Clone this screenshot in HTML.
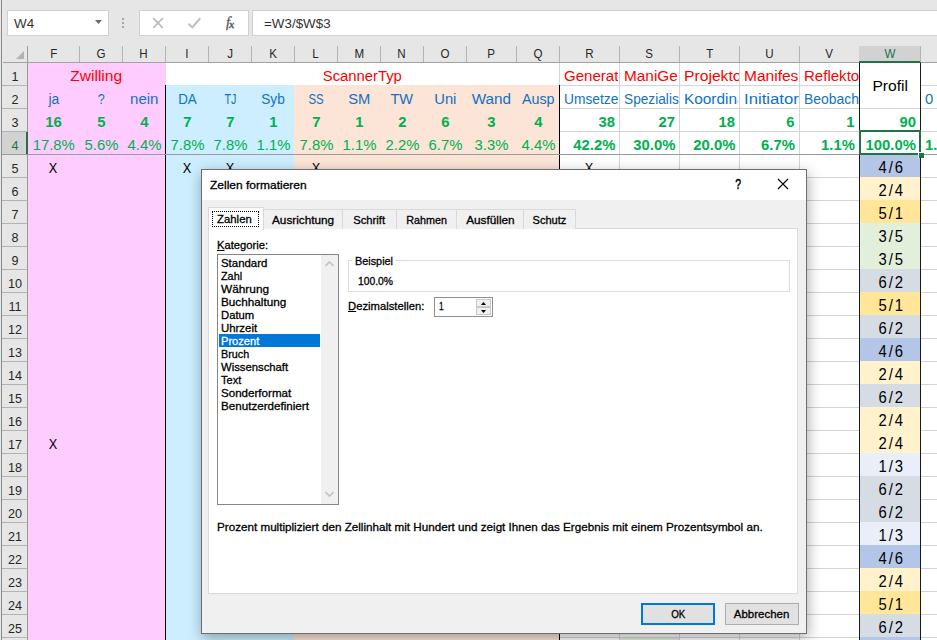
<!DOCTYPE html>
<html><head><meta charset="utf-8"><title>Zellen formatieren</title>
<style>
html,body{margin:0;padding:0}
body{width:937px;height:640px;overflow:hidden;background:#fff;position:relative;font-family:"Liberation Sans",sans-serif;}
.a{position:absolute}
.t{position:absolute;white-space:nowrap;line-height:1}
.ch{position:absolute;top:46px;height:16px;font-size:12.6px;line-height:17px;text-align:center;color:#262626}
.rh{position:absolute;left:3px;width:24px;height:22px;font-size:12.6px;line-height:29px;text-align:center;color:#262626}
.c{position:absolute;display:flex;height:22px;font-size:15.8px;line-height:26px;white-space:nowrap;overflow:hidden}
.b{font-weight:bold}
.red{color:#ff0000}.blu{color:#0f72c4}.grn{color:#00b050}
.dl{font-size:11.4px;color:#000;-webkit-text-stroke:0.3px}
</style></head><body>

<div class="a" style="left:0;top:0;width:937px;height:63px;background:#e6e6e6"></div>
<div class="a" style="left:7px;top:10px;width:102px;height:26px;background:#fff;border:1px solid #d0d0d0;box-sizing:border-box"></div>
<div class="t" style="left:14px;top:17px;font-size:13.4px;color:#333">W4</div>
<svg class="a" style="left:95px;top:20px" width="8" height="5"><path d="M0 0h7L3.5 4z" fill="#6a6a6a"/></svg>
<div class="a" style="left:122px;top:18px;width:2px;height:2px;background:#a6a6a6;box-shadow:0 4px 0 #a6a6a6,0 8px 0 #a6a6a6"></div>
<div class="a" style="left:139px;top:10px;width:110px;height:26px;background:#fff;border:1px solid #d0d0d0;box-sizing:border-box"></div>
<svg class="a" style="left:152px;top:17px" width="12" height="12"><path d="M1.2 1.2l9.6 9.6M10.8 1.2l-9.6 9.6" stroke="#bdbdbd" stroke-width="1.8" fill="none"/></svg>
<svg class="a" style="left:187px;top:17px" width="15" height="12"><path d="M1.5 6.8l3.8 3.6l8-9.2" stroke="#bdbdbd" stroke-width="2" fill="none"/></svg>
<div class="t" style="left:226px;top:15px;font-family:'Liberation Serif',serif;font-style:italic;font-size:14.5px;color:#5a5a5a;-webkit-text-stroke:.3px">f<b style="font-size:10.5px;margin-left:-1px;position:relative;top:1px">x</b></div>
<div class="a" style="left:252px;top:10px;width:700px;height:26px;background:#fff;border:1px solid #d0d0d0;box-sizing:border-box"></div>
<div class="t" style="left:264px;top:17px;font-size:13.4px;color:#333">=W3/$W$3</div>
<svg class="a" style="left:16px;top:51px" width="8" height="8"><path d="M8 0v8H0z" fill="#b2b2b2"/></svg>
<div class="a" style="left:27px;top:46px;width:1px;height:17px;background:#9b9b9b"></div>
<div class="a" style="left:3px;top:62px;width:934px;height:1px;background:#a3a3a3"></div>
<div class="ch" style="left:28px;width:51px"><span style="display:inline-block;transform:scaleX(.92)">F</span></div>
<div class="a" style="left:79px;top:46px;width:1px;height:16px;background:#b4b4b4"></div>
<div class="ch" style="left:80px;width:42px"><span style="display:inline-block;transform:scaleX(.92)">G</span></div>
<div class="a" style="left:122px;top:46px;width:1px;height:16px;background:#b4b4b4"></div>
<div class="ch" style="left:123px;width:42px"><span style="display:inline-block;transform:scaleX(.92)">H</span></div>
<div class="a" style="left:165px;top:46px;width:1px;height:16px;background:#b4b4b4"></div>
<div class="ch" style="left:166px;width:42px"><span style="display:inline-block;transform:scaleX(.92)">I</span></div>
<div class="a" style="left:208px;top:46px;width:1px;height:16px;background:#b4b4b4"></div>
<div class="ch" style="left:209px;width:42px"><span style="display:inline-block;transform:scaleX(.92)">J</span></div>
<div class="a" style="left:251px;top:46px;width:1px;height:16px;background:#b4b4b4"></div>
<div class="ch" style="left:252px;width:42px"><span style="display:inline-block;transform:scaleX(.92)">K</span></div>
<div class="a" style="left:294px;top:46px;width:1px;height:16px;background:#b4b4b4"></div>
<div class="ch" style="left:295px;width:42px"><span style="display:inline-block;transform:scaleX(.92)">L</span></div>
<div class="a" style="left:337px;top:46px;width:1px;height:16px;background:#b4b4b4"></div>
<div class="ch" style="left:338px;width:42px"><span style="display:inline-block;transform:scaleX(.92)">M</span></div>
<div class="a" style="left:380px;top:46px;width:1px;height:16px;background:#b4b4b4"></div>
<div class="ch" style="left:381px;width:42px"><span style="display:inline-block;transform:scaleX(.92)">N</span></div>
<div class="a" style="left:423px;top:46px;width:1px;height:16px;background:#b4b4b4"></div>
<div class="ch" style="left:424px;width:42px"><span style="display:inline-block;transform:scaleX(.92)">O</span></div>
<div class="a" style="left:466px;top:46px;width:1px;height:16px;background:#b4b4b4"></div>
<div class="ch" style="left:467px;width:49px"><span style="display:inline-block;transform:scaleX(.92)">P</span></div>
<div class="a" style="left:516px;top:46px;width:1px;height:16px;background:#b4b4b4"></div>
<div class="ch" style="left:517px;width:42px"><span style="display:inline-block;transform:scaleX(.92)">Q</span></div>
<div class="a" style="left:559px;top:46px;width:1px;height:16px;background:#b4b4b4"></div>
<div class="ch" style="left:560px;width:59px"><span style="display:inline-block;transform:scaleX(.92)">R</span></div>
<div class="a" style="left:619px;top:46px;width:1px;height:16px;background:#b4b4b4"></div>
<div class="ch" style="left:620px;width:59px"><span style="display:inline-block;transform:scaleX(.92)">S</span></div>
<div class="a" style="left:679px;top:46px;width:1px;height:16px;background:#b4b4b4"></div>
<div class="ch" style="left:680px;width:59px"><span style="display:inline-block;transform:scaleX(.92)">T</span></div>
<div class="a" style="left:739px;top:46px;width:1px;height:16px;background:#b4b4b4"></div>
<div class="ch" style="left:740px;width:59px"><span style="display:inline-block;transform:scaleX(.92)">U</span></div>
<div class="a" style="left:799px;top:46px;width:1px;height:16px;background:#b4b4b4"></div>
<div class="ch" style="left:800px;width:59px"><span style="display:inline-block;transform:scaleX(.92)">V</span></div>
<div class="a" style="left:859px;top:46px;width:1px;height:16px;background:#b4b4b4"></div>
<div class="a" style="left:859px;top:46px;width:62px;height:15px;background:#d2d2d2"></div>
<div class="a" style="left:859px;top:61px;width:62px;height:2px;background:#217346"></div>
<div class="ch" style="left:860px;width:60px;color:#217346"><span style="display:inline-block;transform:scaleX(.92)">W</span></div>
<div class="a" style="left:920px;top:46px;width:1px;height:16px;background:#b4b4b4"></div>
<div class="ch" style="left:921px;width:59px"><span style="display:inline-block;transform:scaleX(.92)">X</span></div>
<div class="a" style="left:980px;top:46px;width:1px;height:16px;background:#b4b4b4"></div>
<div class="a" style="left:0px;top:63px;width:28px;height:577px;background:#e6e6e6"></div>
<div class="a" style="left:27px;top:63px;width:1px;height:577px;background:#9b9b9b"></div>
<div class="rh" style="top:63px">1</div>
<div class="a" style="left:2px;top:85px;width:25px;height:1px;background:#b4b4b4"></div>
<div class="rh" style="top:86px">2</div>
<div class="a" style="left:2px;top:108px;width:25px;height:1px;background:#b4b4b4"></div>
<div class="rh" style="top:109px">3</div>
<div class="a" style="left:2px;top:131px;width:25px;height:1px;background:#b4b4b4"></div>
<div class="a" style="left:2px;top:132px;width:25px;height:22px;background:#d2d2d2"></div>
<div class="a" style="left:26px;top:132px;width:2px;height:22px;background:#217346"></div>
<div class="rh" style="top:132px;color:#217346">4</div>
<div class="a" style="left:2px;top:154px;width:25px;height:1px;background:#b4b4b4"></div>
<div class="rh" style="top:155px">5</div>
<div class="a" style="left:2px;top:177px;width:25px;height:1px;background:#b4b4b4"></div>
<div class="rh" style="top:178px">6</div>
<div class="a" style="left:2px;top:200px;width:25px;height:1px;background:#b4b4b4"></div>
<div class="rh" style="top:201px">7</div>
<div class="a" style="left:2px;top:223px;width:25px;height:1px;background:#b4b4b4"></div>
<div class="rh" style="top:224px">8</div>
<div class="a" style="left:2px;top:246px;width:25px;height:1px;background:#b4b4b4"></div>
<div class="rh" style="top:247px">9</div>
<div class="a" style="left:2px;top:269px;width:25px;height:1px;background:#b4b4b4"></div>
<div class="rh" style="top:270px">10</div>
<div class="a" style="left:2px;top:292px;width:25px;height:1px;background:#b4b4b4"></div>
<div class="rh" style="top:293px">11</div>
<div class="a" style="left:2px;top:315px;width:25px;height:1px;background:#b4b4b4"></div>
<div class="rh" style="top:316px">12</div>
<div class="a" style="left:2px;top:338px;width:25px;height:1px;background:#b4b4b4"></div>
<div class="rh" style="top:339px">13</div>
<div class="a" style="left:2px;top:361px;width:25px;height:1px;background:#b4b4b4"></div>
<div class="rh" style="top:362px">14</div>
<div class="a" style="left:2px;top:384px;width:25px;height:1px;background:#b4b4b4"></div>
<div class="rh" style="top:385px">15</div>
<div class="a" style="left:2px;top:407px;width:25px;height:1px;background:#b4b4b4"></div>
<div class="rh" style="top:408px">16</div>
<div class="a" style="left:2px;top:430px;width:25px;height:1px;background:#b4b4b4"></div>
<div class="rh" style="top:431px">17</div>
<div class="a" style="left:2px;top:453px;width:25px;height:1px;background:#b4b4b4"></div>
<div class="rh" style="top:454px">18</div>
<div class="a" style="left:2px;top:476px;width:25px;height:1px;background:#b4b4b4"></div>
<div class="rh" style="top:477px">19</div>
<div class="a" style="left:2px;top:499px;width:25px;height:1px;background:#b4b4b4"></div>
<div class="rh" style="top:500px">20</div>
<div class="a" style="left:2px;top:522px;width:25px;height:1px;background:#b4b4b4"></div>
<div class="rh" style="top:523px">21</div>
<div class="a" style="left:2px;top:545px;width:25px;height:1px;background:#b4b4b4"></div>
<div class="rh" style="top:546px">22</div>
<div class="a" style="left:2px;top:568px;width:25px;height:1px;background:#b4b4b4"></div>
<div class="rh" style="top:569px">23</div>
<div class="a" style="left:2px;top:591px;width:25px;height:1px;background:#b4b4b4"></div>
<div class="rh" style="top:592px">24</div>
<div class="a" style="left:2px;top:614px;width:25px;height:1px;background:#b4b4b4"></div>
<div class="rh" style="top:615px">25</div>
<div class="a" style="left:2px;top:637px;width:25px;height:1px;background:#b4b4b4"></div>
<div class="rh" style="top:638px">26</div>
<div class="a" style="left:2px;top:660px;width:25px;height:1px;background:#b4b4b4"></div>
<div class="a" style="left:1px;top:0;width:1px;height:640px;background:#8c8c8c"></div>
<div class="a" style="left:28px;top:85px;width:909px;height:1px;background:#d4d4d4"></div>
<div class="a" style="left:28px;top:108px;width:909px;height:1px;background:#d4d4d4"></div>
<div class="a" style="left:28px;top:131px;width:909px;height:1px;background:#d4d4d4"></div>
<div class="a" style="left:28px;top:154px;width:909px;height:1px;background:#d4d4d4"></div>
<div class="a" style="left:28px;top:177px;width:909px;height:1px;background:#d4d4d4"></div>
<div class="a" style="left:28px;top:200px;width:909px;height:1px;background:#d4d4d4"></div>
<div class="a" style="left:28px;top:223px;width:909px;height:1px;background:#d4d4d4"></div>
<div class="a" style="left:28px;top:246px;width:909px;height:1px;background:#d4d4d4"></div>
<div class="a" style="left:28px;top:269px;width:909px;height:1px;background:#d4d4d4"></div>
<div class="a" style="left:28px;top:292px;width:909px;height:1px;background:#d4d4d4"></div>
<div class="a" style="left:28px;top:315px;width:909px;height:1px;background:#d4d4d4"></div>
<div class="a" style="left:28px;top:338px;width:909px;height:1px;background:#d4d4d4"></div>
<div class="a" style="left:28px;top:361px;width:909px;height:1px;background:#d4d4d4"></div>
<div class="a" style="left:28px;top:384px;width:909px;height:1px;background:#d4d4d4"></div>
<div class="a" style="left:28px;top:407px;width:909px;height:1px;background:#d4d4d4"></div>
<div class="a" style="left:28px;top:430px;width:909px;height:1px;background:#d4d4d4"></div>
<div class="a" style="left:28px;top:453px;width:909px;height:1px;background:#d4d4d4"></div>
<div class="a" style="left:28px;top:476px;width:909px;height:1px;background:#d4d4d4"></div>
<div class="a" style="left:28px;top:499px;width:909px;height:1px;background:#d4d4d4"></div>
<div class="a" style="left:28px;top:522px;width:909px;height:1px;background:#d4d4d4"></div>
<div class="a" style="left:28px;top:545px;width:909px;height:1px;background:#d4d4d4"></div>
<div class="a" style="left:28px;top:568px;width:909px;height:1px;background:#d4d4d4"></div>
<div class="a" style="left:28px;top:591px;width:909px;height:1px;background:#d4d4d4"></div>
<div class="a" style="left:28px;top:614px;width:909px;height:1px;background:#d4d4d4"></div>
<div class="a" style="left:28px;top:637px;width:909px;height:1px;background:#d4d4d4"></div>
<div class="a" style="left:28px;top:660px;width:909px;height:1px;background:#d4d4d4"></div>
<div class="a" style="left:79px;top:86px;width:1px;height:560px;background:#d4d4d4"></div>
<div class="a" style="left:122px;top:86px;width:1px;height:560px;background:#d4d4d4"></div>
<div class="a" style="left:165px;top:86px;width:1px;height:560px;background:#d4d4d4"></div>
<div class="a" style="left:208px;top:86px;width:1px;height:560px;background:#d4d4d4"></div>
<div class="a" style="left:251px;top:86px;width:1px;height:560px;background:#d4d4d4"></div>
<div class="a" style="left:294px;top:86px;width:1px;height:560px;background:#d4d4d4"></div>
<div class="a" style="left:337px;top:86px;width:1px;height:560px;background:#d4d4d4"></div>
<div class="a" style="left:380px;top:86px;width:1px;height:560px;background:#d4d4d4"></div>
<div class="a" style="left:423px;top:86px;width:1px;height:560px;background:#d4d4d4"></div>
<div class="a" style="left:466px;top:86px;width:1px;height:560px;background:#d4d4d4"></div>
<div class="a" style="left:516px;top:86px;width:1px;height:560px;background:#d4d4d4"></div>
<div class="a" style="left:559px;top:86px;width:1px;height:560px;background:#d4d4d4"></div>
<div class="a" style="left:619px;top:86px;width:1px;height:560px;background:#d4d4d4"></div>
<div class="a" style="left:679px;top:86px;width:1px;height:560px;background:#d4d4d4"></div>
<div class="a" style="left:739px;top:86px;width:1px;height:560px;background:#d4d4d4"></div>
<div class="a" style="left:799px;top:86px;width:1px;height:560px;background:#d4d4d4"></div>
<div class="a" style="left:859px;top:86px;width:1px;height:560px;background:#d4d4d4"></div>
<div class="a" style="left:920px;top:86px;width:1px;height:560px;background:#d4d4d4"></div>
<div class="a" style="left:980px;top:86px;width:1px;height:560px;background:#d4d4d4"></div>
<div class="a" style="left:619px;top:63px;width:1px;height:23px;background:#d4d4d4"></div>
<div class="a" style="left:679px;top:63px;width:1px;height:23px;background:#d4d4d4"></div>
<div class="a" style="left:739px;top:63px;width:1px;height:23px;background:#d4d4d4"></div>
<div class="a" style="left:799px;top:63px;width:1px;height:23px;background:#d4d4d4"></div>
<div class="a" style="left:859px;top:63px;width:1px;height:23px;background:#d4d4d4"></div>
<div class="a" style="left:920px;top:63px;width:1px;height:23px;background:#d4d4d4"></div>
<div class="a" style="left:559px;top:63px;width:1px;height:23px;background:#d4d4d4"></div>
<div class="a" style="left:28px;top:63px;width:138px;height:577px;background:#ffccff"></div>
<div class="a" style="left:166px;top:85px;width:128px;height:555px;background:#cceeff"></div>
<div class="a" style="left:294px;top:85px;width:266px;height:555px;background:#fce4d6"></div>
<div class="a" style="left:165px;top:85px;width:1px;height:555px;background:#000"></div>
<div class="a" style="left:559px;top:85px;width:1px;height:555px;background:#000"></div>
<div class="a" style="left:860px;top:63px;width:60px;height:45px;background:#fff"></div>
<div class="a" style="left:860px;top:154px;width:60px;height:23px;background:#b4c6e7"></div>
<div class="c" style="left:860px;top:155px;width:60px;height:22px;color:#000;justify-content:center;letter-spacing:2.2px;padding-left:2.8px;line-height:24.5px;box-sizing:border-box"><span style="display:inline-block;font-size:16.4px;transform:scaleX(0.9055);transform-origin:center center">4/6</span></div>
<div class="a" style="left:860px;top:177px;width:60px;height:23px;background:#fff2cc"></div>
<div class="c" style="left:860px;top:178px;width:60px;height:22px;color:#000;justify-content:center;letter-spacing:2.2px;padding-left:2.8px;line-height:24.5px;box-sizing:border-box"><span style="display:inline-block;font-size:16.4px;transform:scaleX(0.9055);transform-origin:center center">2/4</span></div>
<div class="a" style="left:860px;top:200px;width:60px;height:23px;background:#ffe699"></div>
<div class="c" style="left:860px;top:201px;width:60px;height:22px;color:#000;justify-content:center;letter-spacing:2.2px;padding-left:2.8px;line-height:24.5px;box-sizing:border-box"><span style="display:inline-block;font-size:16.4px;transform:scaleX(0.9055);transform-origin:center center">5/1</span></div>
<div class="a" style="left:860px;top:223px;width:60px;height:23px;background:#e2efda"></div>
<div class="c" style="left:860px;top:224px;width:60px;height:22px;color:#000;justify-content:center;letter-spacing:2.2px;padding-left:2.8px;line-height:24.5px;box-sizing:border-box"><span style="display:inline-block;font-size:16.4px;transform:scaleX(0.9055);transform-origin:center center">3/5</span></div>
<div class="a" style="left:860px;top:246px;width:60px;height:23px;background:#e2efda"></div>
<div class="c" style="left:860px;top:247px;width:60px;height:22px;color:#000;justify-content:center;letter-spacing:2.2px;padding-left:2.8px;line-height:24.5px;box-sizing:border-box"><span style="display:inline-block;font-size:16.4px;transform:scaleX(0.9055);transform-origin:center center">3/5</span></div>
<div class="a" style="left:860px;top:269px;width:60px;height:23px;background:#d6dce4"></div>
<div class="c" style="left:860px;top:270px;width:60px;height:22px;color:#000;justify-content:center;letter-spacing:2.2px;padding-left:2.8px;line-height:24.5px;box-sizing:border-box"><span style="display:inline-block;font-size:16.4px;transform:scaleX(0.9055);transform-origin:center center">6/2</span></div>
<div class="a" style="left:860px;top:292px;width:60px;height:23px;background:#ffe699"></div>
<div class="c" style="left:860px;top:293px;width:60px;height:22px;color:#000;justify-content:center;letter-spacing:2.2px;padding-left:2.8px;line-height:24.5px;box-sizing:border-box"><span style="display:inline-block;font-size:16.4px;transform:scaleX(0.9055);transform-origin:center center">5/1</span></div>
<div class="a" style="left:860px;top:315px;width:60px;height:23px;background:#d6dce4"></div>
<div class="c" style="left:860px;top:316px;width:60px;height:22px;color:#000;justify-content:center;letter-spacing:2.2px;padding-left:2.8px;line-height:24.5px;box-sizing:border-box"><span style="display:inline-block;font-size:16.4px;transform:scaleX(0.9055);transform-origin:center center">6/2</span></div>
<div class="a" style="left:860px;top:338px;width:60px;height:23px;background:#b4c6e7"></div>
<div class="c" style="left:860px;top:339px;width:60px;height:22px;color:#000;justify-content:center;letter-spacing:2.2px;padding-left:2.8px;line-height:24.5px;box-sizing:border-box"><span style="display:inline-block;font-size:16.4px;transform:scaleX(0.9055);transform-origin:center center">4/6</span></div>
<div class="a" style="left:860px;top:361px;width:60px;height:23px;background:#fff2cc"></div>
<div class="c" style="left:860px;top:362px;width:60px;height:22px;color:#000;justify-content:center;letter-spacing:2.2px;padding-left:2.8px;line-height:24.5px;box-sizing:border-box"><span style="display:inline-block;font-size:16.4px;transform:scaleX(0.9055);transform-origin:center center">2/4</span></div>
<div class="a" style="left:860px;top:384px;width:60px;height:23px;background:#d6dce4"></div>
<div class="c" style="left:860px;top:385px;width:60px;height:22px;color:#000;justify-content:center;letter-spacing:2.2px;padding-left:2.8px;line-height:24.5px;box-sizing:border-box"><span style="display:inline-block;font-size:16.4px;transform:scaleX(0.9055);transform-origin:center center">6/2</span></div>
<div class="a" style="left:860px;top:407px;width:60px;height:23px;background:#fff2cc"></div>
<div class="c" style="left:860px;top:408px;width:60px;height:22px;color:#000;justify-content:center;letter-spacing:2.2px;padding-left:2.8px;line-height:24.5px;box-sizing:border-box"><span style="display:inline-block;font-size:16.4px;transform:scaleX(0.9055);transform-origin:center center">2/4</span></div>
<div class="a" style="left:860px;top:430px;width:60px;height:23px;background:#fff2cc"></div>
<div class="c" style="left:860px;top:431px;width:60px;height:22px;color:#000;justify-content:center;letter-spacing:2.2px;padding-left:2.8px;line-height:24.5px;box-sizing:border-box"><span style="display:inline-block;font-size:16.4px;transform:scaleX(0.9055);transform-origin:center center">2/4</span></div>
<div class="a" style="left:860px;top:453px;width:60px;height:23px;background:#e9eef8"></div>
<div class="c" style="left:860px;top:454px;width:60px;height:22px;color:#000;justify-content:center;letter-spacing:2.2px;padding-left:2.8px;line-height:24.5px;box-sizing:border-box"><span style="display:inline-block;font-size:16.4px;transform:scaleX(0.9055);transform-origin:center center">1/3</span></div>
<div class="a" style="left:860px;top:476px;width:60px;height:23px;background:#d6dce4"></div>
<div class="c" style="left:860px;top:477px;width:60px;height:22px;color:#000;justify-content:center;letter-spacing:2.2px;padding-left:2.8px;line-height:24.5px;box-sizing:border-box"><span style="display:inline-block;font-size:16.4px;transform:scaleX(0.9055);transform-origin:center center">6/2</span></div>
<div class="a" style="left:860px;top:499px;width:60px;height:23px;background:#d6dce4"></div>
<div class="c" style="left:860px;top:500px;width:60px;height:22px;color:#000;justify-content:center;letter-spacing:2.2px;padding-left:2.8px;line-height:24.5px;box-sizing:border-box"><span style="display:inline-block;font-size:16.4px;transform:scaleX(0.9055);transform-origin:center center">6/2</span></div>
<div class="a" style="left:860px;top:522px;width:60px;height:23px;background:#e9eef8"></div>
<div class="c" style="left:860px;top:523px;width:60px;height:22px;color:#000;justify-content:center;letter-spacing:2.2px;padding-left:2.8px;line-height:24.5px;box-sizing:border-box"><span style="display:inline-block;font-size:16.4px;transform:scaleX(0.9055);transform-origin:center center">1/3</span></div>
<div class="a" style="left:860px;top:545px;width:60px;height:23px;background:#b4c6e7"></div>
<div class="c" style="left:860px;top:546px;width:60px;height:22px;color:#000;justify-content:center;letter-spacing:2.2px;padding-left:2.8px;line-height:24.5px;box-sizing:border-box"><span style="display:inline-block;font-size:16.4px;transform:scaleX(0.9055);transform-origin:center center">4/6</span></div>
<div class="a" style="left:860px;top:568px;width:60px;height:23px;background:#fff2cc"></div>
<div class="c" style="left:860px;top:569px;width:60px;height:22px;color:#000;justify-content:center;letter-spacing:2.2px;padding-left:2.8px;line-height:24.5px;box-sizing:border-box"><span style="display:inline-block;font-size:16.4px;transform:scaleX(0.9055);transform-origin:center center">2/4</span></div>
<div class="a" style="left:860px;top:591px;width:60px;height:23px;background:#ffe699"></div>
<div class="c" style="left:860px;top:592px;width:60px;height:22px;color:#000;justify-content:center;letter-spacing:2.2px;padding-left:2.8px;line-height:24.5px;box-sizing:border-box"><span style="display:inline-block;font-size:16.4px;transform:scaleX(0.9055);transform-origin:center center">5/1</span></div>
<div class="a" style="left:860px;top:614px;width:60px;height:23px;background:#d6dce4"></div>
<div class="c" style="left:860px;top:615px;width:60px;height:22px;color:#000;justify-content:center;letter-spacing:2.2px;padding-left:2.8px;line-height:24.5px;box-sizing:border-box"><span style="display:inline-block;font-size:16.4px;transform:scaleX(0.9055);transform-origin:center center">6/2</span></div>
<div class="a" style="left:860px;top:637px;width:60px;height:23px;background:#b4c6e7"></div>
<div class="c" style="left:860px;top:638px;width:60px;height:22px;color:#000;justify-content:center;letter-spacing:2.2px;padding-left:2.8px;line-height:24.5px;box-sizing:border-box"><span style="display:inline-block;font-size:16.4px;transform:scaleX(0.9055);transform-origin:center center">4/6</span></div>
<div class="a" style="left:859px;top:63px;width:1px;height:577px;background:#1a1a1a"></div>
<div class="a" style="left:920px;top:63px;width:1px;height:577px;background:#1a1a1a"></div>
<div class="a" style="left:620px;top:638px;width:59px;height:2px;background:#e2efda"></div>
<div class="c red" style="left:28px;top:63px;width:137px;justify-content:center"><span style="display:inline-block;font-size:15.1px;transform:scaleX(1.0332);transform-origin:center center">Zwilling</span></div>
<div class="c red" style="left:166px;top:63px;width:393px;justify-content:center"><span style="display:inline-block;font-size:15.1px;transform:scaleX(0.9808);transform-origin:center center">ScannerTyp</span></div>
<div class="c red" style="left:560px;top:63px;width:58px;justify-content:flex-start;box-sizing:border-box;padding-left:3.5px"><span style="display:inline-block;font-size:15.1px;transform:scaleX(0.9973);transform-origin:left center">Generator</span></div>
<div class="c red" style="left:620px;top:63px;width:58px;justify-content:flex-start;box-sizing:border-box;padding-left:3.5px"><span style="display:inline-block;font-size:15.1px;transform:scaleX(1.0178);transform-origin:left center">ManiGenerator</span></div>
<div class="c red" style="left:680px;top:63px;width:59px;justify-content:flex-start;box-sizing:border-box;padding-left:3.5px"><span style="display:inline-block;font-size:15.1px;transform:scaleX(1.0386);transform-origin:left center">Projektor</span></div>
<div class="c red" style="left:740px;top:63px;width:58px;justify-content:flex-start;box-sizing:border-box;padding-left:3.5px"><span style="display:inline-block;font-size:15.1px;transform:scaleX(1.0291);transform-origin:left center">Manifestor</span></div>
<div class="c red" style="left:800px;top:63px;width:59px;justify-content:flex-start;box-sizing:border-box;padding-left:3.5px"><span style="display:inline-block;font-size:15.1px;transform:scaleX(0.9968);transform-origin:left center">Reflektor</span></div>
<div class="c blu" style="left:560px;top:86px;width:59px;justify-content:flex-start;box-sizing:border-box;padding-left:3.5px"><span style="display:inline-block;font-size:15.1px;transform:scaleX(0.9133);transform-origin:left center">Umsetzer</span></div>
<div class="c blu" style="left:620px;top:86px;width:59px;justify-content:flex-start;box-sizing:border-box;padding-left:3.5px"><span style="display:inline-block;font-size:15.1px;transform:scaleX(0.9072);transform-origin:left center">Spezialist</span></div>
<div class="c blu" style="left:680px;top:86px;width:58px;justify-content:flex-start;box-sizing:border-box;padding-left:3.5px"><span style="display:inline-block;font-size:15.1px;transform:scaleX(1.0186);transform-origin:left center">Koordinator</span></div>
<div class="c blu" style="left:740px;top:86px;width:59px;justify-content:flex-start;box-sizing:border-box;padding-left:3.5px"><span style="display:inline-block;font-size:15.1px;transform:scaleX(1.1071);transform-origin:left center">Initiator</span></div>
<div class="c blu" style="left:800px;top:86px;width:59px;justify-content:flex-start;box-sizing:border-box;padding-left:3.5px"><span style="display:inline-block;font-size:15.1px;transform:scaleX(0.9229);transform-origin:left center">Beobachter</span></div>
<div class="c" style="left:860px;top:63px;width:60px;height:45px;line-height:45px;color:#000;justify-content:center"><span style="display:inline-block;font-size:15.1px;transform:scaleX(1.0323);transform-origin:center center">Profil</span></div>
<div class="c blu" style="left:28px;top:86px;width:51px;justify-content:center;"><span style="display:inline-block;font-size:15.1px;transform:scaleX(0.9106);transform-origin:center center">ja</span></div>
<div class="c blu" style="left:80px;top:86px;width:42px;justify-content:center;"><span style="display:inline-block;font-size:15.1px;transform:scaleX(0.8327);transform-origin:center center">?</span></div>
<div class="c blu" style="left:123px;top:86px;width:42px;justify-content:center;"><span style="display:inline-block;font-size:15.1px;transform:scaleX(0.9949);transform-origin:center center">nein</span></div>
<div class="c blu" style="left:166px;top:86px;width:42px;justify-content:center;"><span style="display:inline-block;font-size:15.1px;transform:scaleX(0.8870);transform-origin:center center">DA</span></div>
<div class="c blu" style="left:209px;top:86px;width:42px;justify-content:center;"><span style="display:inline-block;font-size:15.1px;transform:scaleX(0.7151);transform-origin:center center">TJ</span></div>
<div class="c blu" style="left:252px;top:86px;width:42px;justify-content:center;"><span style="display:inline-block;font-size:15.1px;transform:scaleX(0.9033);transform-origin:center center">Syb</span></div>
<div class="c blu" style="left:295px;top:86px;width:42px;justify-content:center;"><span style="display:inline-block;font-size:15.1px;transform:scaleX(0.7547);transform-origin:center center">SS</span></div>
<div class="c blu" style="left:338px;top:86px;width:42px;justify-content:center;"><span style="display:inline-block;font-size:15.1px;transform:scaleX(0.9761);transform-origin:center center">SM</span></div>
<div class="c blu" style="left:381px;top:86px;width:42px;justify-content:center;"><span style="display:inline-block;font-size:15.1px;transform:scaleX(0.9630);transform-origin:center center">TW</span></div>
<div class="c blu" style="left:424px;top:86px;width:42px;justify-content:center;"><span style="display:inline-block;font-size:15.1px;transform:scaleX(0.9754);transform-origin:center center">Uni</span></div>
<div class="c blu" style="left:467px;top:86px;width:49px;justify-content:center;"><span style="display:inline-block;font-size:15.1px;transform:scaleX(1.0109);transform-origin:center center">Wand</span></div>
<div class="c blu" style="left:517px;top:86px;width:42px;justify-content:center;"><span style="display:inline-block;font-size:15.1px;transform:scaleX(0.9475);transform-origin:center center">Ausp</span></div>
<div class="c blu" style="left:921px;top:86px;width:59px;justify-content:flex-start;box-sizing:border-box;padding-left:4px;"><span style="display:inline-block;font-size:15.3px;transform:scaleX(0.9706);transform-origin:left center">0</span></div>
<div class="c grn b" style="left:28px;top:109px;width:51px;justify-content:center;"><span style="display:inline-block;font-size:15.3px;transform:scaleX(0.9706);transform-origin:center center">16</span></div>
<div class="c grn b" style="left:80px;top:109px;width:42px;justify-content:center;"><span style="display:inline-block;font-size:15.3px;transform:scaleX(0.9706);transform-origin:center center">5</span></div>
<div class="c grn b" style="left:123px;top:109px;width:42px;justify-content:center;"><span style="display:inline-block;font-size:15.3px;transform:scaleX(0.9706);transform-origin:center center">4</span></div>
<div class="c grn b" style="left:166px;top:109px;width:42px;justify-content:center;"><span style="display:inline-block;font-size:15.3px;transform:scaleX(0.9706);transform-origin:center center">7</span></div>
<div class="c grn b" style="left:209px;top:109px;width:42px;justify-content:center;"><span style="display:inline-block;font-size:15.3px;transform:scaleX(0.9706);transform-origin:center center">7</span></div>
<div class="c grn b" style="left:252px;top:109px;width:42px;justify-content:center;"><span style="display:inline-block;font-size:15.3px;transform:scaleX(0.9706);transform-origin:center center">1</span></div>
<div class="c grn b" style="left:295px;top:109px;width:42px;justify-content:center;"><span style="display:inline-block;font-size:15.3px;transform:scaleX(0.9706);transform-origin:center center">7</span></div>
<div class="c grn b" style="left:338px;top:109px;width:42px;justify-content:center;"><span style="display:inline-block;font-size:15.3px;transform:scaleX(0.9706);transform-origin:center center">1</span></div>
<div class="c grn b" style="left:381px;top:109px;width:42px;justify-content:center;"><span style="display:inline-block;font-size:15.3px;transform:scaleX(0.9706);transform-origin:center center">2</span></div>
<div class="c grn b" style="left:424px;top:109px;width:42px;justify-content:center;"><span style="display:inline-block;font-size:15.3px;transform:scaleX(0.9706);transform-origin:center center">6</span></div>
<div class="c grn b" style="left:467px;top:109px;width:49px;justify-content:center;"><span style="display:inline-block;font-size:15.3px;transform:scaleX(0.9706);transform-origin:center center">3</span></div>
<div class="c grn b" style="left:517px;top:109px;width:42px;justify-content:center;"><span style="display:inline-block;font-size:15.3px;transform:scaleX(0.9706);transform-origin:center center">4</span></div>
<div class="c grn b" style="left:560px;top:109px;width:59px;justify-content:flex-end;box-sizing:border-box;padding-right:4px;"><span style="display:inline-block;font-size:15.3px;transform:scaleX(0.9706);transform-origin:right center">38</span></div>
<div class="c grn b" style="left:620px;top:109px;width:59px;justify-content:flex-end;box-sizing:border-box;padding-right:4px;"><span style="display:inline-block;font-size:15.3px;transform:scaleX(0.9706);transform-origin:right center">27</span></div>
<div class="c grn b" style="left:680px;top:109px;width:59px;justify-content:flex-end;box-sizing:border-box;padding-right:4px;"><span style="display:inline-block;font-size:15.3px;transform:scaleX(0.9706);transform-origin:right center">18</span></div>
<div class="c grn b" style="left:740px;top:109px;width:59px;justify-content:flex-end;box-sizing:border-box;padding-right:4px;"><span style="display:inline-block;font-size:15.3px;transform:scaleX(0.9706);transform-origin:right center">6</span></div>
<div class="c grn b" style="left:800px;top:109px;width:59px;justify-content:flex-end;box-sizing:border-box;padding-right:4px;"><span style="display:inline-block;font-size:15.3px;transform:scaleX(0.9706);transform-origin:right center">1</span></div>
<div class="c grn b" style="left:860px;top:109px;width:60px;justify-content:flex-end;box-sizing:border-box;padding-right:4px;"><span style="display:inline-block;font-size:15.3px;transform:scaleX(0.9706);transform-origin:right center">90</span></div>
<div class="c grn" style="left:28px;top:132px;width:51px;justify-content:center;"><span style="display:inline-block;font-size:15.3px;transform:scaleX(0.9706);transform-origin:center center">17.8%</span></div>
<div class="c grn" style="left:80px;top:132px;width:42px;justify-content:center;"><span style="display:inline-block;font-size:15.3px;transform:scaleX(0.9706);transform-origin:center center">5.6%</span></div>
<div class="c grn" style="left:123px;top:132px;width:42px;justify-content:center;"><span style="display:inline-block;font-size:15.3px;transform:scaleX(0.9706);transform-origin:center center">4.4%</span></div>
<div class="c grn" style="left:166px;top:132px;width:42px;justify-content:center;"><span style="display:inline-block;font-size:15.3px;transform:scaleX(0.9706);transform-origin:center center">7.8%</span></div>
<div class="c grn" style="left:209px;top:132px;width:42px;justify-content:center;"><span style="display:inline-block;font-size:15.3px;transform:scaleX(0.9706);transform-origin:center center">7.8%</span></div>
<div class="c grn" style="left:252px;top:132px;width:42px;justify-content:center;"><span style="display:inline-block;font-size:15.3px;transform:scaleX(0.9706);transform-origin:center center">1.1%</span></div>
<div class="c grn" style="left:295px;top:132px;width:42px;justify-content:center;"><span style="display:inline-block;font-size:15.3px;transform:scaleX(0.9706);transform-origin:center center">7.8%</span></div>
<div class="c grn" style="left:338px;top:132px;width:42px;justify-content:center;"><span style="display:inline-block;font-size:15.3px;transform:scaleX(0.9706);transform-origin:center center">1.1%</span></div>
<div class="c grn" style="left:381px;top:132px;width:42px;justify-content:center;"><span style="display:inline-block;font-size:15.3px;transform:scaleX(0.9706);transform-origin:center center">2.2%</span></div>
<div class="c grn" style="left:424px;top:132px;width:42px;justify-content:center;"><span style="display:inline-block;font-size:15.3px;transform:scaleX(0.9706);transform-origin:center center">6.7%</span></div>
<div class="c grn" style="left:467px;top:132px;width:49px;justify-content:center;"><span style="display:inline-block;font-size:15.3px;transform:scaleX(0.9706);transform-origin:center center">3.3%</span></div>
<div class="c grn" style="left:517px;top:132px;width:42px;justify-content:center;"><span style="display:inline-block;font-size:15.3px;transform:scaleX(0.9706);transform-origin:center center">4.4%</span></div>
<div class="c grn b" style="left:560px;top:132px;width:59px;justify-content:flex-end;box-sizing:border-box;padding-right:4px;"><span style="display:inline-block;font-size:15.3px;transform:scaleX(0.9706);transform-origin:right center">42.2%</span></div>
<div class="c grn b" style="left:620px;top:132px;width:59px;justify-content:flex-end;box-sizing:border-box;padding-right:4px;"><span style="display:inline-block;font-size:15.3px;transform:scaleX(0.9706);transform-origin:right center">30.0%</span></div>
<div class="c grn b" style="left:680px;top:132px;width:59px;justify-content:flex-end;box-sizing:border-box;padding-right:4px;"><span style="display:inline-block;font-size:15.3px;transform:scaleX(0.9706);transform-origin:right center">20.0%</span></div>
<div class="c grn b" style="left:740px;top:132px;width:59px;justify-content:flex-end;box-sizing:border-box;padding-right:4px;"><span style="display:inline-block;font-size:15.3px;transform:scaleX(0.9706);transform-origin:right center">6.7%</span></div>
<div class="c grn b" style="left:800px;top:132px;width:59px;justify-content:flex-end;box-sizing:border-box;padding-right:4px;"><span style="display:inline-block;font-size:15.3px;transform:scaleX(0.9706);transform-origin:right center">1.1%</span></div>
<div class="c grn b" style="left:860px;top:132px;width:60px;justify-content:flex-end;box-sizing:border-box;padding-right:4px;"><span style="display:inline-block;font-size:15.3px;transform:scaleX(0.9706);transform-origin:right center">100.0%</span></div>
<div class="c grn b" style="left:921px;top:132px;width:59px;justify-content:flex-start;box-sizing:border-box;padding-left:4px;"><span style="display:inline-block;font-size:15.3px;transform:scaleX(0.9706);transform-origin:left center">1.1%</span></div>
<div class="c " style="left:28px;top:155px;width:51px;justify-content:center;color:#000;"><span style="display:inline-block;font-size:15.1px;transform:scaleX(0.8434);transform-origin:center center">X</span></div>
<div class="c " style="left:166px;top:155px;width:42px;justify-content:center;color:#000;"><span style="display:inline-block;font-size:15.1px;transform:scaleX(0.8434);transform-origin:center center">X</span></div>
<div class="c " style="left:209px;top:155px;width:42px;justify-content:center;color:#000;"><span style="display:inline-block;font-size:15.1px;transform:scaleX(0.8434);transform-origin:center center">X</span></div>
<div class="c " style="left:295px;top:155px;width:42px;justify-content:center;color:#000;"><span style="display:inline-block;font-size:15.1px;transform:scaleX(0.8434);transform-origin:center center">X</span></div>
<div class="c " style="left:560px;top:155px;width:59px;justify-content:center;color:#000;"><span style="display:inline-block;font-size:15.1px;transform:scaleX(0.8434);transform-origin:center center">X</span></div>
<div class="c " style="left:28px;top:431px;width:51px;justify-content:center;color:#000;"><span style="display:inline-block;font-size:15.1px;transform:scaleX(0.8434);transform-origin:center center">X</span></div>
<div class="a" style="left:2px;top:154px;width:935px;height:1px;background:#9b9b9b"></div>
<div class="a" style="left:859px;top:130px;width:62px;height:25px;border:2px solid #217346;box-sizing:border-box"></div>
<div class="a" style="left:918px;top:152px;width:5px;height:5px;background:#217346;border:1px solid #fff;border-right:0;border-bottom:0;box-sizing:content-box"></div>
<div class="a" style="left:201px;top:169px;width:606px;height:465px;background:#f0f0f0;border:1px solid #6e6e6e;box-sizing:border-box;box-shadow:1px 4px 13px 0 rgba(0,0,0,.34)"></div>
<div class="a" style="left:202px;top:170px;width:604px;height:30px;background:#fff"></div>
<div class="t dl" style="left:210px;top:179.65px;color:#000;font-size:11.4px"><span style="display:inline-block;transform:scaleX(1.0532);transform-origin:left center">Zellen formatieren</span></div>
<div class="t" style="left:733.5px;top:176.5px;font-size:14.5px;color:#000;-webkit-text-stroke:.5px"><span style="display:inline-block;transform:scaleX(.72)">?</span></div>
<svg class="a" style="left:777px;top:178px" width="12" height="12"><path d="M1 1l10 10M11 1L1 11" stroke="#000" stroke-width="1.1" fill="none"/></svg>
<div class="a" style="left:208px;top:228px;width:590px;height:366px;background:#fff;border:1px solid #dadada;box-sizing:border-box"></div>
<div class="a dl" style="left:263px;top:209px;width:80px;height:20px;border:1px solid #d9d9d9;border-bottom:0;box-sizing:border-box;background:#f0f0f0;display:flex;justify-content:center;line-height:20px;white-space:nowrap"><span style="display:inline-block;transform:scaleX(1.0340);transform-origin:center center">Ausrichtung</span></div>
<div class="a dl" style="left:342px;top:209px;width:55px;height:20px;border:1px solid #d9d9d9;border-bottom:0;box-sizing:border-box;background:#f0f0f0;display:flex;justify-content:center;line-height:20px;white-space:nowrap"><span style="display:inline-block;transform:scaleX(0.9882);transform-origin:center center">Schrift</span></div>
<div class="a dl" style="left:396px;top:209px;width:61px;height:20px;border:1px solid #d9d9d9;border-bottom:0;box-sizing:border-box;background:#f0f0f0;display:flex;justify-content:center;line-height:20px;white-space:nowrap"><span style="display:inline-block;transform:scaleX(0.9451);transform-origin:center center">Rahmen</span></div>
<div class="a dl" style="left:456px;top:209px;width:68px;height:20px;border:1px solid #d9d9d9;border-bottom:0;box-sizing:border-box;background:#f0f0f0;display:flex;justify-content:center;line-height:20px;white-space:nowrap"><span style="display:inline-block;transform:scaleX(1.0350);transform-origin:center center">Ausfüllen</span></div>
<div class="a dl" style="left:523px;top:209px;width:53px;height:20px;border:1px solid #d9d9d9;border-bottom:0;box-sizing:border-box;background:#f0f0f0;display:flex;justify-content:center;line-height:20px;white-space:nowrap"><span style="display:inline-block;transform:scaleX(0.9705);transform-origin:center center">Schutz</span></div>
<div class="a dl" style="left:208px;top:207px;width:56px;height:23px;border:1px solid #d9d9d9;border-bottom:0;box-sizing:border-box;background:#fff;display:flex;justify-content:center;line-height:22px;padding-right:3.5px"><span style="display:inline-block;transform:scaleX(0.9930);transform-origin:center center">Zahlen</span></div>
<div class="a" style="left:212px;top:211px;width:47px;height:16px;border:1px dotted #000;box-sizing:border-box"></div>
<div class="t dl" style="left:217px;top:240.25px;color:#000;font-size:11.4px"><span style="display:inline-block;transform:scaleX(0.9858);transform-origin:left center"><u>K</u>ategorie:</span></div>
<div class="a" style="left:217px;top:254px;width:122px;height:251px;background:#fff;border:1px solid #828790;box-sizing:border-box"></div>
<div class="a" style="left:321px;top:255px;width:17px;height:249px;background:#f0f0f0"></div>
<svg class="a" style="left:325px;top:261px" width="9" height="6"><path d="M0.5 5l4-4l4 4" stroke="#c2c2c2" stroke-width="1.6" fill="none"/></svg>
<svg class="a" style="left:325px;top:491px" width="9" height="6"><path d="M0.5 1l4 4l4-4" stroke="#c2c2c2" stroke-width="1.6" fill="none"/></svg>
<div class="t dl" style="left:221px;top:257.65px;color:#000;font-size:11.4px"><span style="display:inline-block;transform:scaleX(1.0036);transform-origin:left center">Standard</span></div>
<div class="t dl" style="left:221px;top:270.65px;color:#000;font-size:11.4px"><span style="display:inline-block;transform:scaleX(0.9517);transform-origin:left center">Zahl</span></div>
<div class="t dl" style="left:221px;top:283.65px;color:#000;font-size:11.4px"><span style="display:inline-block;transform:scaleX(1.0404);transform-origin:left center">Währung</span></div>
<div class="t dl" style="left:221px;top:296.65px;color:#000;font-size:11.4px"><span style="display:inline-block;transform:scaleX(1.0309);transform-origin:left center">Buchhaltung</span></div>
<div class="t dl" style="left:221px;top:309.65px;color:#000;font-size:11.4px"><span style="display:inline-block;transform:scaleX(0.9892);transform-origin:left center">Datum</span></div>
<div class="t dl" style="left:221px;top:322.65px;color:#000;font-size:11.4px"><span style="display:inline-block;transform:scaleX(1.0002);transform-origin:left center">Uhrzeit</span></div>
<div class="a" style="left:219px;top:334px;width:101px;height:13px;background:#0078d7"></div>
<div class="t dl" style="left:221px;top:335.65px;color:#fff;font-size:11.4px"><span style="display:inline-block;transform:scaleX(0.9754);transform-origin:left center">Prozent</span></div>
<div class="t dl" style="left:221px;top:348.65px;color:#000;font-size:11.4px"><span style="display:inline-block;transform:scaleX(0.9474);transform-origin:left center">Bruch</span></div>
<div class="t dl" style="left:221px;top:361.65px;color:#000;font-size:11.4px"><span style="display:inline-block;transform:scaleX(0.9906);transform-origin:left center">Wissenschaft</span></div>
<div class="t dl" style="left:221px;top:374.65px;color:#000;font-size:11.4px"><span style="display:inline-block;transform:scaleX(0.9669);transform-origin:left center">Text</span></div>
<div class="t dl" style="left:221px;top:387.65px;color:#000;font-size:11.4px"><span style="display:inline-block;transform:scaleX(1.0172);transform-origin:left center">Sonderformat</span></div>
<div class="t dl" style="left:221px;top:400.65px;color:#000;font-size:11.4px"><span style="display:inline-block;transform:scaleX(1.0206);transform-origin:left center">Benutzerdefiniert</span></div>
<div class="a" style="left:348px;top:260px;width:442px;height:32px;border:1px solid #dcdcdc;box-sizing:border-box"></div>
<div class="a" style="left:352px;top:260px;width:43px;height:1px;background:#fff"></div>
<div class="t dl" style="left:354.5px;top:256.35px;color:#000;font-size:11.4px"><span style="display:inline-block;transform:scaleX(0.9526);transform-origin:left center">Beispiel</span></div>
<div class="t dl" style="left:358px;top:275.65px;color:#000;font-size:11.4px"><span style="display:inline-block;transform:scaleX(0.9058);transform-origin:left center">100.0%</span></div>
<div class="t dl" style="left:348px;top:301.35px;color:#000;font-size:11.4px"><span style="display:inline-block;transform:scaleX(0.9879);transform-origin:left center"><u>D</u>ezimalstellen:</span></div>
<div class="a" style="left:434px;top:297px;width:59px;height:20px;background:#fff;border:1px solid #8f8f8f;box-sizing:border-box"></div>
<div class="t dl" style="left:439px;top:301.35px;color:#000;font-size:11.4px"><span style="display:inline-block;transform:scaleX(0.7251);transform-origin:left center">1</span></div>
<div class="a" style="left:476px;top:299px;width:15px;height:8px;background:#f0f0f0;border:1px solid #c8c8c8;box-sizing:border-box"></div>
<div class="a" style="left:476px;top:307px;width:15px;height:8px;background:#f0f0f0;border:1px solid #c8c8c8;box-sizing:border-box"></div>
<svg class="a" style="left:481px;top:301.5px" width="5" height="3"><path d="M0 3h5L2.5 0z" fill="#000"/></svg>
<svg class="a" style="left:481px;top:309.5px" width="5" height="3"><path d="M0 0h5L2.5 3z" fill="#000"/></svg>
<div class="t dl" style="left:217.4px;top:521.65px;color:#000;font-size:11.4px"><span style="display:inline-block;transform:scaleX(1.0235);transform-origin:left center">Prozent multipliziert den Zellinhalt mit Hundert und zeigt Ihnen das Ergebnis mit einem Prozentsymbol an.</span></div>
<div class="a dl" style="left:641px;top:603px;width:74px;height:22px;background:#e1e1e1;border:2px solid #0078d7;box-sizing:border-box;display:flex;justify-content:center;line-height:19px"><span style="display:inline-block;transform:scaleX(0.8562);transform-origin:center center">OK</span></div>
<div class="a dl" style="left:725px;top:603px;width:74px;height:22px;background:#e1e1e1;border:1px solid #adadad;box-sizing:border-box;display:flex;justify-content:center;line-height:21px"><span style="display:inline-block;transform:scaleX(1.0071);transform-origin:center center">Abbrechen</span></div>
</body></html>
